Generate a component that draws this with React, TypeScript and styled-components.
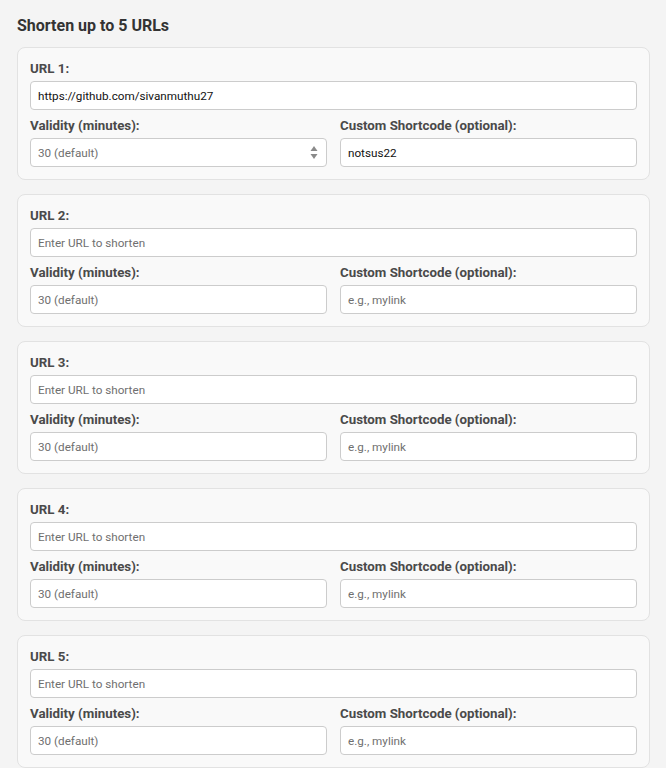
import React from "react";
import styled, { createGlobalStyle } from "styled-components";

const Global = createGlobalStyle`
  html, body { margin: 0; padding: 0; background: #f4f4f4; }
  body { font-family: Roboto, "Liberation Sans", Arial, sans-serif; }
  * { box-sizing: border-box; }
`;

const Page = styled.div`
  padding: 16px 16px 0 17px;
`;

const Title = styled.h2`
  margin: 0 0 11px;
  font-size: 16px;
  line-height: 20px;
  font-weight: 700;
  color: #333;
`;

const List = styled.div`
  display: flex;
  flex-direction: column;
  gap: 14px;
`;

const Card = styled.div`
  background: #f9f9f9;
  border: 1px solid #e2e2e2;
  border-radius: 8px;
  padding: 13px 12px 12px;
`;

const Label = styled.label`
  display: block;
  font-size: 13.3px;
  line-height: 16px;
  font-weight: 700;
  color: #4a4a4a;
  margin-bottom: 4px;
`;

const Row = styled.div`
  display: grid;
  grid-template-columns: 1fr 1fr;
  gap: 13px;
  margin-top: 8px;
`;

const Field = styled.div`
  position: relative;
`;

const Input = styled.input`
  display: block;
  width: 100%;
  height: 29px;
  border: 1px solid #cccccc;
  border-radius: 4px;
  background: #fff;
  padding: 0 7px;
  font-family: Roboto, "Liberation Sans", Arial, sans-serif;
  font-size: 11.7px;
  color: #111;
  outline: none;
  &::placeholder { color: #6f6f6f; }
  &::-webkit-inner-spin-button,
  &::-webkit-outer-spin-button { -webkit-appearance: none; margin: 0; }
  -moz-appearance: textfield;
`;

const Spinner = styled.svg`
  position: absolute;
  right: 9px;
  top: 7px;
  pointer-events: none;
`;

type Entry = { url: string; code: string; spin?: boolean };

const entries: Entry[] = [
  { url: "https://github.com/sivanmuthu27", code: "notsus22", spin: true },
  { url: "", code: "" },
  { url: "", code: "" },
  { url: "", code: "" },
  { url: "", code: "" },
];

export default function App() {
  return (
    <>
      <Global />
      <Page>
        <Title>Shorten up to 5 URLs</Title>
        <List>
          {entries.map((e, i) => (
            <Card key={i}>
              <Label>URL {i + 1}:</Label>
              <Input defaultValue={e.url} placeholder="Enter URL to shorten" />
              <Row>
                <div>
                  <Label>Validity (minutes):</Label>
                  <Field>
                    <Input type="number" placeholder="30 (default)" />
                    {e.spin && (
                      <Spinner width="8" height="15" viewBox="0 0 8 15">
                        <path d="M4 1 L7.5 6 L0.5 6 Z" fill="#8a8a8a" />
                        <path d="M4 14 L7.5 9 L0.5 9 Z" fill="#8a8a8a" />
                      </Spinner>
                    )}
                  </Field>
                </div>
                <div>
                  <Label>Custom Shortcode (optional):</Label>
                  <Input defaultValue={e.code} placeholder="e.g., mylink" />
                </div>
              </Row>
            </Card>
          ))}
        </List>
      </Page>
    </>
  );
}
